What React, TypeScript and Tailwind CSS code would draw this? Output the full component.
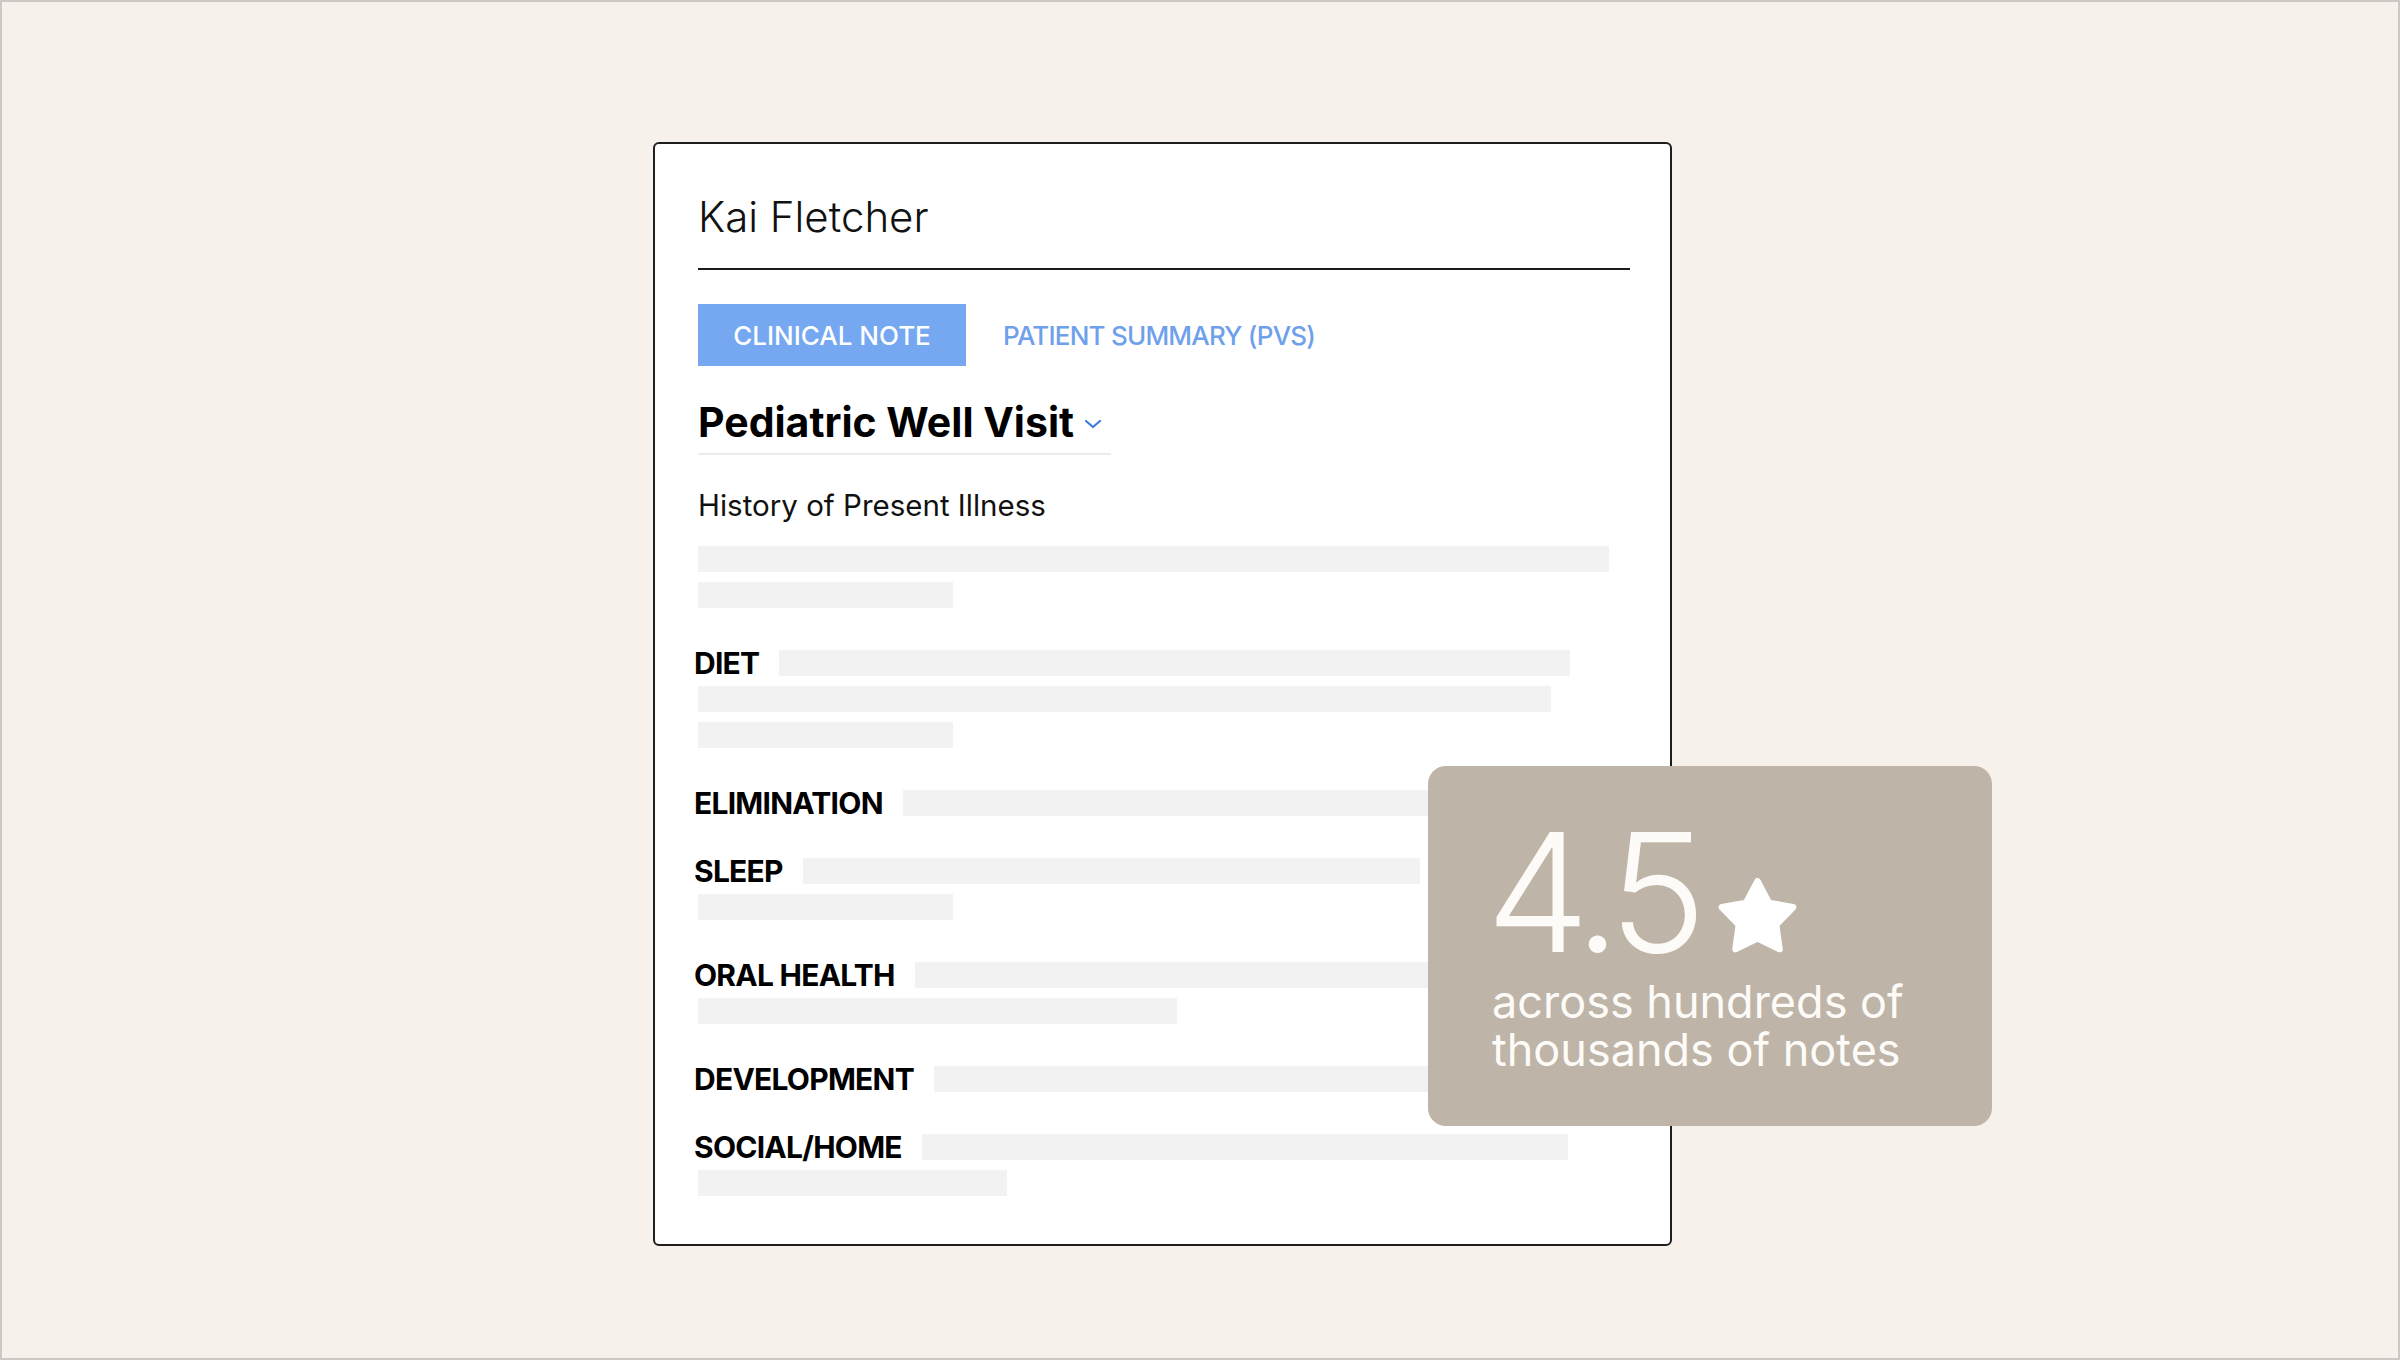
import React from 'react';

type Section = {
  label: string;
  barEnd: number; // right gap from content edge for the inline bar
  lines: number[]; // widths of the bars beneath
};

const sections: Section[] = [
  { label: 'DIET', barEnd: 60, lines: [853, 255] },
  { label: 'ELIMINATION', barEnd: 60, lines: [] },
  { label: 'SLEEP', barEnd: 210, lines: [255] },
  { label: 'ORAL HEALTH', barEnd: 60, lines: [479] },
  { label: 'DEVELOPMENT', barEnd: 60, lines: [] },
  { label: 'SOCIAL/HOME', barEnd: 62, lines: [309] },
];

function Bar({ width }: { width: number }) {
  return <div className="h-[26px] bg-[#f2f2f2]" style={{ width }} />;
}

function SectionBlock({ section }: { section: Section }) {
  return (
    <div className="flex flex-col gap-[10px]">
      <div className="flex items-start gap-[20px]" style={{ paddingRight: section.barEnd }}>
        <span className="-ml-[4px] text-[30px] leading-[26px] font-bold text-black tracking-[-0.025em] whitespace-nowrap">
          {section.label}
        </span>
        <div className="h-[26px] flex-1 bg-[#f2f2f2]" />
      </div>
      {section.lines.map((w, i) => (
        <Bar key={i} width={w} />
      ))}
    </div>
  );
}

function Star() {
  return (
    <svg width="79" height="75" viewBox="2 3 96 92" className="mb-[14px] ml-[21px]">
      <polygon
        points="50,7 64.1,33.6 93.7,38.8 72.8,60.4 77,90.2 50,77 23,90.2 27.2,60.4 6.3,38.8 35.9,33.6"
        fill="#ffffff"
        stroke="#ffffff"
        strokeWidth="8"
        strokeLinejoin="round"
      />
    </svg>
  );
}

function RatingBadge() {
  return (
    <div className="absolute left-[773px] top-[622px] w-[564px] h-[360px] rounded-[18px] bg-[#bfb4a8] pl-[64px] pt-[51px] text-[#fdfbf8]">
      <div className="-ml-[6px] flex items-end">
        <span className="text-[165px] leading-[150px] font-light tracking-[-0.06em]">4.5</span>
        <Star />
      </div>
      <div className="mt-[11px] text-[45px] leading-[48px] font-normal">
        <div>across hundreds of</div>
        <div>thousands of notes</div>
      </div>
    </div>
  );
}

export default function App() {
  return (
    <div className="w-[2400px] h-[1360px] bg-[#f6f1ea] border-2 border-[#cbc9c6] pl-[651px] pt-[140px] font-['Inter',sans-serif] overflow-hidden">
      <div className="relative w-[1019px] h-[1104px] rounded-[6px] border-2 border-[#1e1e1e] bg-white pl-[43px] pr-[40px] pt-[48px]">
        <div className="text-[42px] leading-[50px] font-light text-[#111]">Kai Fletcher</div>
        <div className="mt-[26px] h-[2px] bg-[#1c1c1c]" />

        <div className="mt-[34px] flex items-center gap-[37px]">
          <div className="flex h-[62px] w-[268px] items-center justify-center bg-[#75a8f0] text-[26px] font-medium text-white">
            CLINICAL NOTE
          </div>
          <div className="text-[26px] font-medium text-[#6fa0eb] tracking-[-0.03em]">PATIENT SUMMARY (PVS)</div>
        </div>

        <div className="mt-[31px] inline-flex items-center border-b-2 border-[#ececec] pb-[6px] pr-[9px]">
          <span className="text-[41px] leading-[50px] font-bold text-black">
            Pediatric Well Visit
          </span>
          <svg width="18" height="10" viewBox="0 0 18 10" className="ml-[10px] mt-[4px]">
            <path d="M2 2l7 6 7-6" fill="none" stroke="#3b7ce0" strokeWidth="2.2" strokeLinecap="round" strokeLinejoin="round" />
          </svg>
        </div>

        <div className="mt-[32px] text-[29.5px] leading-[36px] text-[#111]">History of Present Illness</div>

        <div className="mt-[23px] flex flex-col gap-[42px]">
          <div className="flex flex-col gap-[10px]">
            <Bar width={911} />
            <Bar width={255} />
          </div>
          {sections.map((s) => (
            <SectionBlock key={s.label} section={s} />
          ))}
        </div>

        <RatingBadge />
      </div>
    </div>
  );
}
